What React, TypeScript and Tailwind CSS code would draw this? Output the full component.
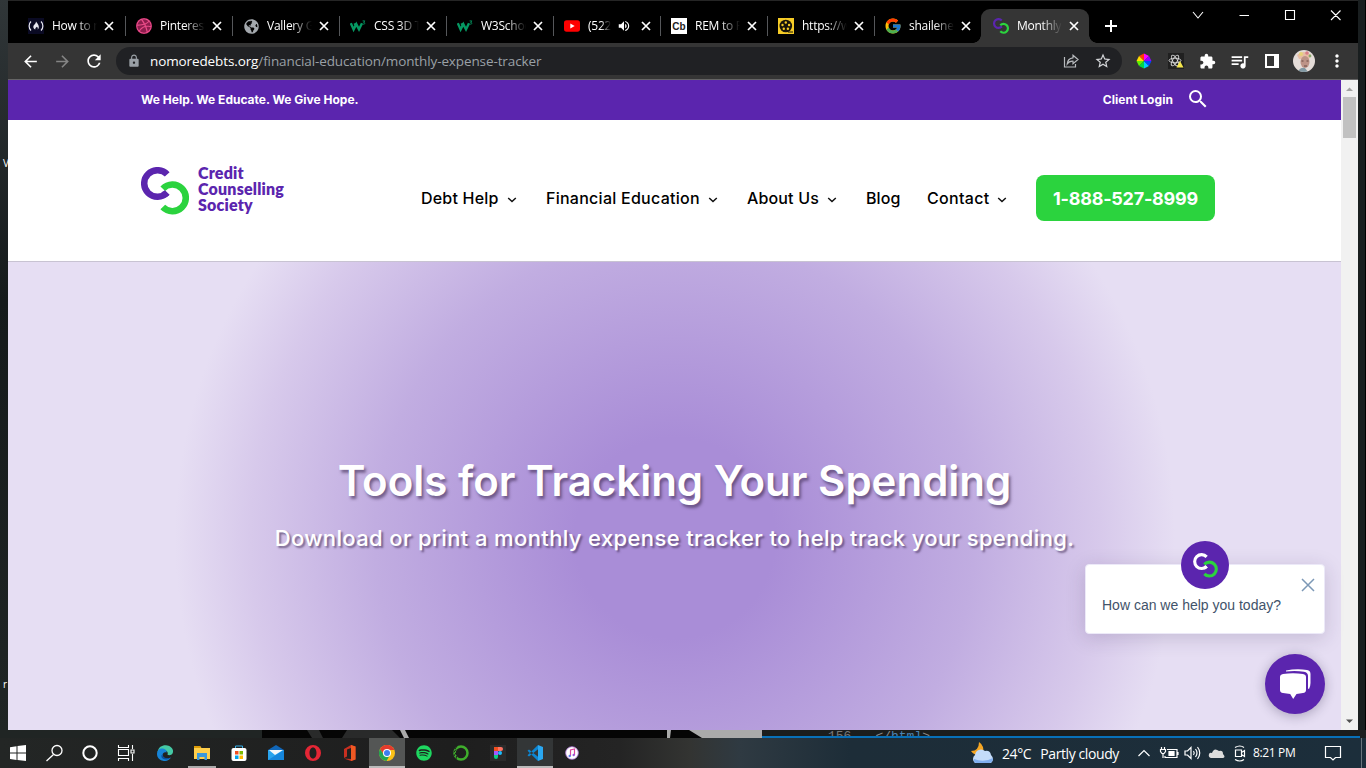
import React from "react";
import { FcGoogle } from "react-icons/fc";
import { FaDribbble, FaSpotify, FaGlobeAmericas } from "react-icons/fa";
import {
  MdLock, MdArrowBack, MdArrowForward, MdRefresh, MdExtension, MdQueueMusic,
  MdStarBorder, MdSearch, MdMoreVert, MdVolumeUp,
} from "react-icons/md";

function Mark({ className, first = "#5b25ae", weight = 6.5 }: { className: string; first?: string; weight?: number }) {
  return (
    <svg viewBox="0 0 48 48" className={className} fill="none" strokeWidth={weight}>
      <path d="M26.200 7.400A13.300 13.300 0 1 0 26.200 25.600" stroke={first} />
      <path d="M21.800 21.800A13.300 13.300 0 1 1 21.800 40" stroke="#2bd33e" />
      <path d="M21.500 28.300Q24.500 27.200 26.200 25.600" stroke={first} />
    </svg>
  );
}

function W3Icon() {
  return (
    <svg viewBox="0 0 16 16" className="size-4" fill="none" stroke="#059862">
      <path d="M.8 5.200 3.600 11.400 6.300 6.200 9 11.400 12 5.200M4.600 5.200 6 8.200" strokeWidth="2.400" />
      <path d="M12.600 2.900h2.200L13.600 4.400c2 0 1.600 2.200-.9 1.700" strokeWidth=".9" />
    </svg>
  );
}

const favicons: Record<string, React.ReactNode> = {
  fcc: (
    <svg viewBox="0 0 16 16" className="size-4" fill="none" stroke="#e8e8f0" strokeWidth="1.2">
      <path d="M0 0h16v16H0z" fill="#0a0a23" stroke="none" />
      <path d="M3 3.500C.5 6 .5 10 3 12.500M13 3.500c2.500 2.500 2.500 6.500 0 9" />
      <path d="M8 3.500c2 2.500 3 4 2.800 6-.1 1-.7 1.700-1.200 2 .5-1.200.2-2-.8-2.800-.4 1-1.800 1-1.500 2.800-1.600-.6-2.400-2-1.800-3.800C6 6.500 8 6 8 3.500z" fill="#e8e8f0" stroke="none" />
    </svg>
  ),
  dribbble: <FaDribbble className="size-4 rounded-full bg-[#8d1d4d] text-[#ea4c89]" />,
  globe: <FaGlobeAmericas className="size-[15px] text-[#a3a8ad]" />,
  w3: <W3Icon />,
  youtube: (
    <svg viewBox="0 0 16 16" className="size-4">
      <rect y="2.300" width="16" height="11.400" rx="2.600" fill="#f00" />
      <path d="M6.300 5.500v5L10.700 8z" fill="#fff" />
    </svg>
  ),
  cb: <span className="flex size-4 items-center justify-center bg-white font-['Liberation_Sans'] text-[10px] font-bold text-[#222]">Cb</span>,
  reel: (
    <svg viewBox="0 0 16 16" className="size-4">
      <rect width="16" height="16" fill="#f5cb26" />
      <circle cx="7.800" cy="8" r="6.300" fill="#17140a" />
      <g fill="#f5cb26">
        <circle cx="7.800" cy="4.500" r="1.200" /><circle cx="11.100" cy="7" r="1.200" /><circle cx="9.900" cy="10.800" r="1.200" />
        <circle cx="5.800" cy="10.800" r="1.200" /><circle cx="4.500" cy="7" r="1.200" />
      </g>
      <path d="M10 14h5" stroke="#17140a" />
    </svg>
  ),
  google: <FcGoogle className="size-[18px] shrink-0" />,
  mark: <Mark className="size-4" />,
};

const tabs = [
  { icon: "fcc", title: "How to ma", first: true },
  { icon: "dribbble", title: "Pinterest" },
  { icon: "globe", title: "Vallery Gr" },
  { icon: "w3", title: "CSS 3D Tr" },
  { icon: "w3", title: "W3Schools" },
  { icon: "youtube", title: "(522) T", audio: true },
  { icon: "cb", title: "REM to PX" },
  { icon: "reel", title: "https://ww" },
  { icon: "google", title: "shailene w" },
];

function Tab({ icon, title, audio, active, first }: { icon: string; title: string; audio?: boolean; active?: boolean; first?: boolean }) {
  const size = active ? "-ml-px w-[108px] rounded-t-[9px] bg-[#353535] pl-[12px]" : first ? "w-[108px] pl-[10px]" : "w-[107px] pl-[10px]";
  return (
    <div className={"relative flex h-[34px] shrink-0 items-center text-[12px] text-white " + size}>
      <span className="flex w-4 shrink-0 justify-center">{favicons[icon]}</span>
      <span className={"ml-2 overflow-hidden whitespace-nowrap tracking-[-0.25px] [mask-image:linear-gradient(90deg,#000_55%,transparent)] " + (audio ? "w-[23px]" : "w-[45px]")}>{title}</span>
      {audio && <MdVolumeUp className="ml-[6px] mr-[2px] size-[14px] shrink-0" />}
      <svg viewBox="0 0 14 14" className={"size-[14px] shrink-0 " + (audio ? "-ml-px" : "ml-[5px]") + (audio ? " translate-x-[7px]" : "")} stroke="#fff" strokeWidth="1.700">
        <path d="m3 3 8 8M11 3l-8 8" />
      </svg>
      {!active && icon !== "google" && <span className="absolute right-0 top-[7px] h-5 w-px bg-[#55575a]" />}
      {active && (
        <>
          <span className="absolute bottom-0 -left-2 size-2 bg-[radial-gradient(circle_at_0_0,transparent_7.5px,#353535_8px)]" />
          <span className="absolute bottom-0 -right-2 size-2 bg-[radial-gradient(circle_at_100%_0,transparent_7.5px,#353535_8px)]" />
        </>
      )}
    </div>
  );
}

function BrowserChrome() {
  return (
    <>
      <div className="flex h-[42px] items-start bg-black pl-[10px] pt-2">
        {tabs.map((t, i) => <Tab key={i} {...t} />)}
        <Tab icon="mark" title="Monthly E" active />
        <svg viewBox="0 0 18 18" className="ml-[13px] mt-2 size-[18px]" stroke="#fff" strokeWidth="2"><path d="M9 3v12M3 9h12" /></svg>
        <svg viewBox="0 0 160 14" className="ml-[69px] h-[14px] w-[160px]" fill="none" stroke="#fff" strokeWidth="1.100">
          <path d="m4 3 5 6 5-6M50.500 6.500H60M96.500 1.500h9v9h-9zM142 1.500l9.500 9.500M151.500 1.500 142 11" />
        </svg>
      </div>
      <div className="flex h-[37px] items-center border-b border-[#656565] bg-[#353535] pl-[13px] text-white">
        <MdArrowBack className="size-[19px]" />
        <MdArrowForward className="ml-[13px] size-[19px] text-[#858585]" />
        <MdRefresh className="ml-[12px] size-5" />
        <div className="ml-[12px] flex h-7 w-[1006px] items-center rounded-full bg-[#202124] pl-[11px] pr-[10px]">
          <MdLock className="size-[14px] text-[#9aa0a6]" />
          <span className="ml-[9px] whitespace-nowrap text-[13.500px] tracking-[-0.11px] text-[#9aa0a6]">
            <span className="text-white">nomoredebts.org</span>/financial-education/monthly-expense-tracker
          </span>
          <svg viewBox="0 0 16 16" className="ml-auto size-4" fill="none" stroke="#b8bbbe" strokeWidth="1.200">
            <path d="M1.500 4v10h11v-3M10 2.200 15 6.500l-5 4.200V8.200C7.500 8 5.500 9 4.200 11c.2-3.500 2.200-5.800 5.800-6.200z" />
          </svg>
          <MdStarBorder className="ml-[15px] size-[18px] text-[#d3d5d8]" />
        </div>
        <svg viewBox="0 0 16 16" className="ml-[14px] size-4">
          <path d="M8 8V.5l5 2.500z" fill="#f0f" /><path d="M8 8V.5L3 3z" fill="#ff3c00" /><path d="M8 8 3 3 .5 8z" fill="#ffdc00" />
          <path d="M8 8H.5L3 13z" fill="#60f000" /><path d="m8 8-5 5 5 2.500z" fill="#00d848" /><path d="M8 8v7.500l5-2.500z" fill="#0cf" />
          <path d="m8 8 5 5 2.500-5z" fill="#0048ff" /><path d="M8 8h7.500L13 3z" fill="#9000ff" />
        </svg>
        <svg viewBox="0 0 16 16" className="ml-4 size-4" fill="none" stroke="#ddd" strokeWidth=".9">
          <path d="M0 0h16v16H0z" fill="#202020" stroke="none" />
          <ellipse cx="7" cy="7.500" rx="6" ry="2.300" /><ellipse cx="7" cy="7.500" rx="6" ry="2.300" transform="rotate(60 7 7.500)" />
          <ellipse cx="7" cy="7.500" rx="6" ry="2.300" transform="rotate(120 7 7.500)" />
          <path d="m12 8 3.500 6.500h-7z" fill="#f4e64c" stroke="none" />
        </svg>
        <MdExtension className="ml-[15px] size-[17px]" />
        <MdQueueMusic className="ml-[13px] size-[21px]" />
        <svg viewBox="0 0 14 14" className="ml-[15px] size-[14px]"><path d="M0 0h14v14H0zm2 2v10h7V2z" fill="#fff" fillRule="evenodd" /></svg>
        <svg viewBox="0 0 22 22" className="ml-[14px] size-[22px] rounded-full">
          <rect width="22" height="22" fill="#e4dcd8" />
          <path d="M4 5Q11-1 18 5l-2 4H6z" fill="#e8bda5" /><circle cx="8" cy="4" r="2" fill="#e6d27a" /><circle cx="14" cy="3" r="1.800" fill="#d97d87" /><circle cx="17" cy="6" r="1.400" fill="#88a86b" />
          <ellipse cx="12" cy="12" rx="4.500" ry="6" fill="#bd9387" /><path d="M8.500 11h2m3 0h2M11 16h3" stroke="#674942" />
          <path d="M5 22q2-5 7-4l3 4z" fill="#8198a3" />
        </svg>
        <MdMoreVert className="ml-3 size-5" />
      </div>
    </>
  );
}

function NavItem({ label, menu = true, className }: { label: string; menu?: boolean; className: string }) {
  return (
    <span className={"flex shrink-0 items-center whitespace-nowrap text-[16px] font-medium text-black " + className}>
      {label}
      {menu && (
        <svg viewBox="0 0 10 8" className="ml-[8px] mt-[3px] h-2 w-[10px]" fill="none" stroke="#111" strokeWidth="1.500"><path d="m1.200 2 3.800 3.500L8.800 2" /></svg>
      )}
    </span>
  );
}

function WebPage() {
  return (
    <div className="relative flex w-[1333px] flex-col bg-white font-[Inter,sans-serif]">
      <div className="flex h-10 items-center bg-[#5b25ae] pl-[133px] pr-[131px] text-[12px] font-bold text-white">
        <span>We Help. We Educate. We Give Hope.</span>
        <span className="ml-auto tracking-[0.05px]">Client Login</span>
        <MdSearch className="ml-[13px] -mt-[2px] size-6" />
      </div>
      <div className="flex h-[142px] items-start border-b border-[#c8c3d2] pl-[133px]">
        <Mark className="mt-[47px] size-12 shrink-0" />
        <div className="ml-[9px] mt-[45px] w-[223px] shrink-0 font-[Lato,sans-serif] text-[16px] leading-[16px] font-extrabold tracking-[0.2px] text-[#5b25ae]">
          <div>Credit</div><div>Counselling</div><div>Society</div>
        </div>
        <nav className="mt-[55px] flex h-[46px] items-center">
          <NavItem label="Debt Help" className="w-[125px] tracking-[0.2px]" />
          <NavItem label="Financial Education" className="w-[201px] tracking-[0.26px]" />
          <NavItem label="About Us" className="w-[119px] tracking-[0.15px]" />
          <NavItem label="Blog" menu={false} className="w-[61px] tracking-[0.1px]" />
          <NavItem label="Contact" className="w-[109px] tracking-[0.3px]" />
          <span className="flex h-[46px] w-[179px] items-center justify-center rounded-lg bg-[#2bd33e] text-[18px] font-bold tracking-[-0.25px] text-white">1-888-527-8999</span>
        </nav>
      </div>
      <div className="flex flex-1 flex-col items-center overflow-hidden bg-[radial-gradient(circle_at_667px_276px,#a98dd7_0px,#a98dd7_100px,#c1ade1_300px,#d7c9eb_425px,#e6def3_500px)] pt-[191px] text-white">
        <h1 className="whitespace-nowrap text-[42px] leading-[56px] font-semibold [text-shadow:2px_3px_3px_rgba(70,50,90,0.65)]">Tools for Tracking Your Spending</h1>
        <p className="mt-[14px] whitespace-nowrap text-[22px] leading-[30px] font-medium tracking-[0.38px] [text-shadow:2px_2px_2px_rgba(70,50,90,0.65)]">Download or print a monthly expense tracker to help track your spending.</p>
      </div>
      <div className="absolute right-4 bottom-[96px] flex h-[70px] w-[240px] items-center rounded-[4px] border border-[#ece9f8] bg-white pt-[12px] pl-4 font-['Liberation_Sans'] text-[14px] text-[#42536a] shadow-[0_4px_20px_rgba(45,30,80,0.18)]">
        How can we help you today?
        <span className="absolute left-[95px] -top-6 flex size-12 items-center justify-center rounded-full bg-[#5b25ae]"><Mark className="size-[25px]" first="#fff" weight={6} /></span>
        <svg viewBox="0 0 14 14" className="absolute right-[9px] top-[13px] size-[14px]" stroke="#7c98b6" strokeWidth="1.500"><path d="m1 1 12 12M13 1 1 13" /></svg>
      </div>
      <div className="absolute right-4 bottom-4 flex size-[60px] items-center justify-center rounded-full bg-[#5b25ae] shadow-[0_2px_12px_rgba(30,20,60,0.3)]">
        <svg viewBox="0 0 32 30" className="size-8" fill="#fff">
          <path d="M4 5Q14 3.500 24 5q3 .5 3 3v13q0 2.500-3 3l-6.500 1-3.300 5-3-5L4 24q-3-.5-3-3V8Q1 5.500 4 5z" />
          <path d="M7 2.500V1.400Q18-.5 28 1q3.500.5 3.500 4v9q0 3-1.500 6l-1-.5V7q0-3.500-4-4.200Q17 1.500 7 2.500z" />
        </svg>
      </div>
    </div>
  );
}

function Scrollbar() {
  return (
    <div className="flex w-[17px] flex-col items-center bg-[#f1f1f1]">
      <svg viewBox="0 0 17 17" className="size-[17px]" fill="#a3a3a3"><path d="M5 11h7L8.500 7.500z" /></svg>
      <div className="h-[41px] w-[13px] bg-[#c1c1c1]" />
      <svg viewBox="0 0 17 17" className="mt-auto size-[17px]" fill="#505050"><path d="M5 6.500h7L8.500 10z" /></svg>
    </div>
  );
}

const apps: { name: string; className?: string; icon: React.ReactNode }[] = [
  { name: "edge", icon: <><path d="M.500 7C1.500 2 5 0 9 .2c5 .3 8.500 4.500 6.500 8.300-1 2-4 2-5 1.200 1-3-1-4.500-4-4.500C4 5 2 6 .5 7z" fill="#45c9a5" /><path d="M0 9c0-4 3-6 6-5.500 2.500.3 4 2.200 3.500 4-2-1-4 .5-3.800 2.500.3 3.500 4 4.500 8.300 2.500-2 3-5 4-8 3.300C2.500 15 0 12.500 0 9z" fill="#1684d8" /><path d="M5.800 9c-1 3 2 5 7.500 3.800-3 3-9 2.200-9-2z" fill="#0b4f9e" /></> },
  { name: "explorer", className: "border-b-2 border-[#aaa] w-7 pt-[2px]", icon: <><path d="M0 1h6l1.500 2H16v11H0z" fill="#ffcf4b" /><path d="M0 1h6l1 2H0z" fill="#dc9b08" /><path d="M3 15V8h10v7h-2.500v-3h-5v3z" fill="#3a98dc" /></> },
  { name: "store", icon: <><path d="M4.500 4V1h7v3" fill="none" stroke="#35aee8" /><rect x=".5" y="3" width="15" height="13" rx="2" fill="#fff" /><path d="M4 6h3.500v3.500H4z" fill="#f25022" /><path d="M8.500 6H12v3.500H8.500z" fill="#7fba00" /><path d="M4 10.500h3.500V14H4z" fill="#00a4ef" /><path d="M8.500 10.500H12V14H8.500z" fill="#ffb900" /></> },
  { name: "mail", icon: <><path d="m0 5 8-5 8 5z" fill="#1066b8" /><path d="M0 5h16v10H0z" fill="#29a4ee" /><path d="M1 5h14L7 10z" fill="#f4f7fa" /><path d="m16 5-16 10h16z" fill="#1586dc" /></> },
  { name: "opera", icon: <path d="M8 0a8 8 0 1 0 0 16A8 8 0 0 0 8 0zm0 2.500c2.200 0 3.500 2.500 3.500 5.500s-1.300 5.500-3.500 5.500S4.500 11 4.500 8 5.800 2.500 8 2.500z" fill="#e42635" /> },
  { name: "office", icon: <><path d="m2 4 7-4 4.500 1.500v13L9 16l-7-2.500 7 .5V3L5 4.500v7L2 13z" fill="#c92f20" /><path d="M9 0l4.500 1.500v13L9 16z" fill="#ef5923" /></> },
  { name: "chrome", className: "bg-[#545655] border-b-2 border-[#bbb] w-9 pt-[2px]", icon: <><circle cx="8" cy="8" r="8" fill="#fbc116" /><path d="M1 4a8 8 0 0 1 14 0l.5 1H8L5 10z" fill="#e33b2e" /><path d="M1 4a8 8 0 0 0 6.500 12l3.500-6H5z" fill="#21a453" /><circle cx="8" cy="8" r="4" fill="#fff" /><circle cx="8" cy="8" r="3" fill="#3c7df0" /></> },
  { name: "anaconda", icon: <><circle cx="8" cy="8" r="6.500" fill="none" stroke="#3fae2c" strokeWidth="2.500" /><path d="M4 1 2 4m1 .5L.8 7.500m2 .5L1 11m2.500 0L3 14" stroke="#202020" strokeWidth="1" /></> },
  { name: "figma", icon: <><path d="M0 0h16v16H0z" fill="#2b2b2b" /><path d="M4 2h4v4H4z" fill="#f24e1e" /><path d="M8 2h3a2 2 0 0 1 0 4H8z" fill="#ff7262" /><path d="M4 6h4v4H4z" fill="#a259ff" /><circle cx="10" cy="8" r="2" fill="#1abcfe" /><path d="M4 10h4v2a2 2 0 0 1-4 0z" fill="#0acf83" /></> },
  { name: "code", className: "bg-[#333637] border-b-2 border-[#bbb] w-9 pt-[2px]", icon: <><path d="m11 0 5 2v12l-5 2z" fill="#2aa8f2" /><path d="M11 4.200 2 11.500.5 10.200 11 0zM11 11.800 2 4.500.5 5.800 11 16z" fill="#0d86d3" /></> },
  { name: "music", icon: <><circle cx="8" cy="8" r="6.300" fill="#fff" stroke="#b67be0" strokeWidth=".8" /><path d="M6.500 11V5l4-1v6" fill="none" stroke="#dc45a0" strokeWidth="1.200" /><circle cx="5.700" cy="11" r="1.200" fill="#5b79ec" /><circle cx="9.700" cy="10" r="1.200" fill="#9a55d8" /></> },
];

function AppIcon({ name }: { name: string }) {
  const app = apps.find((a) => a.name === name)!;
  return (
    <div className={"flex h-[30px] shrink-0 items-center justify-center " + (app.className ?? "w-7")}>
      <svg viewBox="0 0 16 16" className="size-4">{app.icon}</svg>
    </div>
  );
}

function Taskbar() {
  return (
    <div className="flex h-[30px] items-center bg-[linear-gradient(90deg,#232625_0px,#1e1e1e_450px,#242424_620px,#333432_690px,#2f3a42_740px,#1d2d38_850px,#1c2e3b_1366px)] pl-2 text-white">
      <svg viewBox="0 0 134 20" className="h-5 w-[134px] shrink-0" fill="none" stroke="#fff">
        <path d="m2 4.200 6.500-1v6.300H2zM9.500 3 18 2v7.500H9.500zM2 10.500h6.500V17L2 16zM9.500 10.500H18V18l-8.500-1z" fill="#fff" stroke="none" />
        <circle cx="49" cy="7.500" r="5" strokeWidth="1.300" /><path d="m45.500 11.500-7 6.500" strokeWidth="1.300" />
        <circle cx="82" cy="10" r="6.700" strokeWidth="2" />
        <path d="M110.500 2v2.500h10V2M110.500 18v-2.500h10V18M110.500 6.500h10v6h-10zM124.500 2v4M124.500 11v7M123 7h3v3h-3z" strokeWidth="1.100" />
      </svg>
      <div className="ml-[9px] flex gap-[9px]">
        <AppIcon name="edge" /><AppIcon name="explorer" /><AppIcon name="store" /><AppIcon name="mail" /><AppIcon name="opera" /><AppIcon name="office" />
      </div>
      <div className="ml-[5px] flex items-center">
        <AppIcon name="chrome" />
        <FaSpotify className="ml-[11px] size-4 text-[#1ed760]" />
      </div>
      <div className="ml-[15px] flex gap-[9px]"><AppIcon name="anaconda" /><AppIcon name="figma" /></div>
      <div className="ml-[5px] flex gap-[5px]"><AppIcon name="code" /><AppIcon name="music" /></div>
      <svg viewBox="0 0 24 24" className="ml-[384px] size-6 shrink-0">
        <path d="M9 1q6 4 4 12-8 3-12-3 8 0 8-9z" fill="#f5a623" />
        <path d="M5 22a5 5 0 0 1 0-8 6 6 0 0 1 10-4q5-1 6 4 4 4 0 8z" fill="#c4dcfa" /><path d="M4 18q10 4 19-1 0 5-4 5H6q-3-1-2-4z" fill="#80aff0" />
      </svg>
      <span className="ml-2 text-[14px] tracking-[-0.4px]">24°C</span>
      <span className="ml-[9px] whitespace-nowrap text-[14px] tracking-[-0.4px]">Partly cloudy</span>
      <svg viewBox="0 0 112 20" className="ml-[18px] h-5 w-[112px] shrink-0" fill="none" stroke="#fff" strokeWidth="1.200">
        <path d="m1.500 13 5.500-5.500L12.500 13" />
        <path d="M30 6.500h10v8H28V13M41 9v3M24.500 4v2.500m3-2.500v2.500m-4 0h5v2l-1.500 2h-2l-1.500-2zM26 11v4" /><path d="M32 8.500h5v4h-5z" fill="#fff" />
        <path d="M48 8h2.500L54 4.500v11L50.500 12H48zM56.500 8q1.500 2 0 4m2-6q3 4 0 8m2-10q4.500 6 0 12" />
        <path d="M74 15q-3-1-2-4 1-2 3-1 2-6 7-2 4-1 4 3 3 3 0 4z" fill="#ddd" stroke="none" />
        <path d="M98.500 7h6v6.500h-6zm6 2.500 3-2v6l-3-2M98 4.500q5-3 9 0M98 16.500q5 3 9 0" />
      </svg>
      <span className="ml-[4px] whitespace-nowrap text-[12px] tracking-[-0.35px]">8:21 PM</span>
      <svg viewBox="0 0 18 18" className="ml-[29px] size-[18px] shrink-0" fill="none" stroke="#fff" strokeWidth="1.200"><path d="M1.500 2.500h15v11h-5L9 16l-2.500-2.500h-5z" /></svg>
      <span className="ml-auto mr-[4px] h-[30px] w-px bg-[#68757d]" />
    </div>
  );
}

export default function App() {
  return (
    <div className="flex h-[768px] w-[1366px] flex-col overflow-hidden bg-[#1c2021] font-['Open_Sans',sans-serif]">
      <div className="flex h-[730px]">
        <div className="w-2 overflow-hidden bg-[linear-gradient(180deg,#303638_0px,#151a1b_300px,#202525_730px)] pl-[3px] pt-[155px] text-[10px] leading-4 text-white">
          <div>V</div><div className="mt-[505px]">r</div>
        </div>
        <div className="flex w-[1350px] flex-col border-t border-[#252525]">
          <BrowserChrome />
          <div className="flex h-[650px]"><WebPage /><Scrollbar /></div>
        </div>
        <div className="w-2 border-r border-black bg-[#191e1f]" />
      </div>
      <div className="flex h-2">
        <div className="w-[262px] bg-[#202524]" />
        <svg viewBox="0 0 500 8" className="h-2 w-[500px]"><path d="M0 0h500v8H0z" fill="#050505" /><path d="M45 0h12l4 8H50zM85 0h45l8 8H80z" fill="#292a2a" /><path d="M138 0h5l4 8h-5zM405 0h4l-1 8h-3z" fill="#aaa" /><path d="M427 0h73v8h-60z" fill="#aaa" /></svg>
        <div className="flex w-[598px] overflow-hidden border-b-2 border-[#0870b8] bg-[#1b1d1d] pl-[66px] font-['Liberation_Mono'] text-[13px] leading-[13px] text-[#777]">
          <span>156</span><span className="ml-[24px] text-[#4c83b2]"><span className="text-[#888]">&lt;/</span>html<span className="text-[#888]">&gt;</span></span>
        </div>
      </div>
      <Taskbar />
    </div>
  );
}
